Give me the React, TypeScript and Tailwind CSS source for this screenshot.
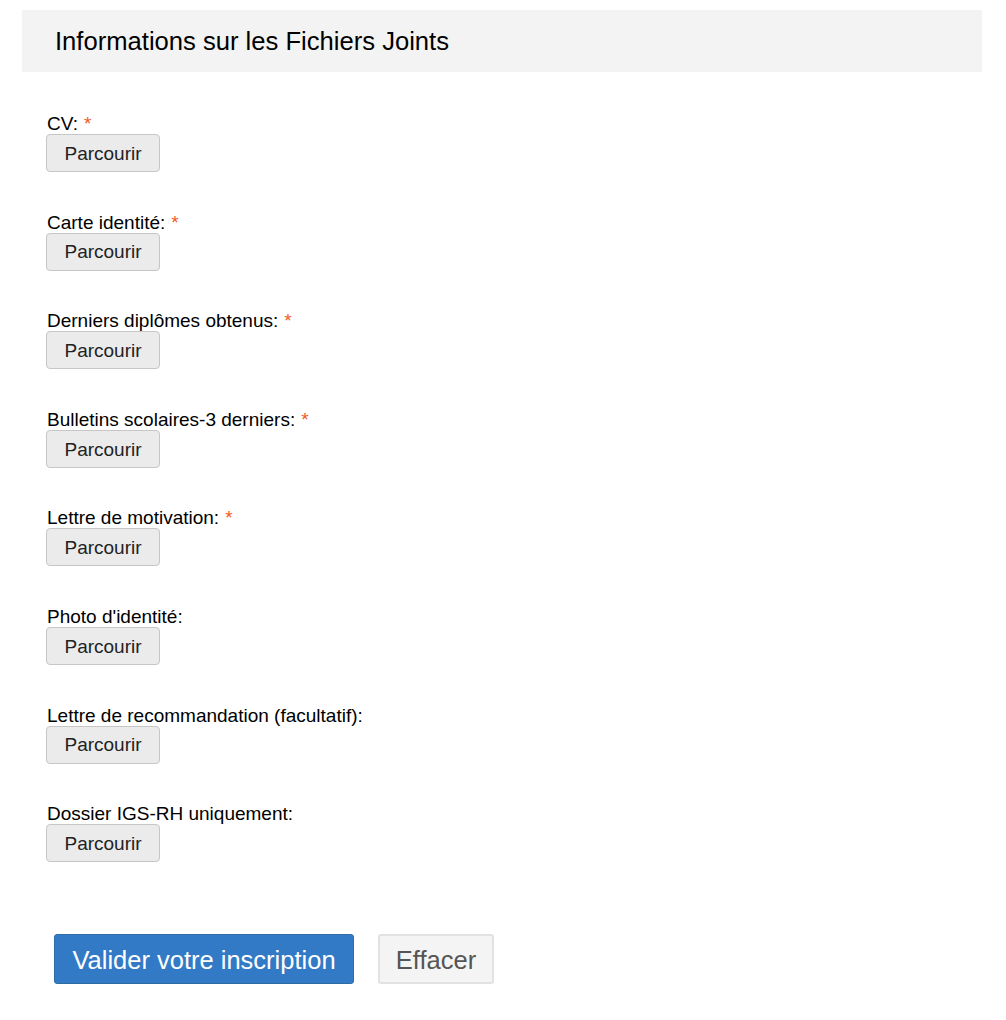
import React from "react";

const fields: { label: string; required: boolean }[] = [
  { label: "CV:", required: true },
  { label: "Carte identité:", required: true },
  { label: "Derniers diplômes obtenus:", required: true },
  { label: "Bulletins scolaires-3 derniers:", required: true },
  { label: "Lettre de motivation:", required: true },
  { label: "Photo d'identité:", required: false },
  { label: "Lettre de recommandation (facultatif):", required: false },
  { label: "Dossier IGS-RH uniquement:", required: false },
];

export default function App() {
  return (
    <div
      className="min-h-[1020px] bg-white px-[22px] pt-[10px] text-black"
      style={{ fontFamily: '"Liberation Sans", Arial, Helvetica, sans-serif' }}
    >
      <div className="flex h-[62px] w-[960px] items-center bg-[#f3f3f3] pl-[33px] pt-[2px]">
        <h2 className="text-[25.6px] leading-none">Informations sur les Fichiers Joints</h2>
      </div>
      <div className="flex flex-col gap-[40.6px] pl-[25px] pt-[42px]">
        {fields.map((f) => (
          <div key={f.label} className="flex flex-col items-start">
            <label className="text-[19px] leading-[20px]">
              {f.label}
              {f.required && <span className="ml-[6px] text-[#f15a24]">*</span>}
            </label>
            <button
              type="button"
              className="h-[38px] w-[114px] -ml-[1px] rounded-[4px] border-[1.5px] border-[#c6c6c6] bg-[#ebebeb] pt-[2px] text-[19px] text-[#222]"
            >
              Parcourir
            </button>
          </div>
        ))}
      </div>
      <div className="flex gap-[24px] pl-[32px] pt-[72px]">
        <button
          type="button"
          className="h-[50px] w-[300px] rounded-[3px] border border-[#2e6da4] bg-[#337ac6] pt-[2px] text-[25.5px] text-white"
        >
          Valider votre inscription
        </button>
        <button
          type="button"
          className="h-[50px] w-[116px] rounded-[3px] border-2 border-[#e2e2e2] bg-[#f4f4f4] pt-[2px] text-[25.5px] text-[#555]"
        >
          Effacer
        </button>
      </div>
    </div>
  );
}
